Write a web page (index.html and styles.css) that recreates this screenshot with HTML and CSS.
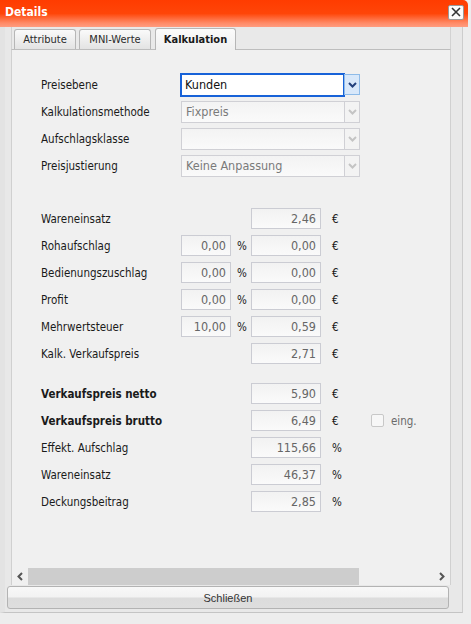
FILE: index.html
```html
<!DOCTYPE html>
<html lang="de">
<head>
    <meta charset="UTF-8">
    <meta name="viewport" content="width=device-width, initial-scale=1.0">
    <title>Details</title>
    <link rel="stylesheet" href="styles.css">
</head>
<body>

    <!-- Details Window -->
    <div class="dialog">
        <div class="titlebar">
            <span class="title">Details</span>
            <span class="close-btn">
                <svg width="10" height="10" viewBox="0 0 10 10"><path d="M1 1 L9 9 M9 1 L1 9" stroke="#333" stroke-width="1.6" fill="none"/></svg>
            </span>
        </div>

        <div class="window-body">
            <!-- Tabs -->
            <div class="tabbar">
                <div class="tab tab-attr">Attribute</div>
                <div class="tab tab-mni">MNI-Werte</div>
                <div class="tab tab-calc active">Kalkulation</div>
            </div>

            <!-- Kalkulation Panel -->
            <div class="panel">
                <div class="form">

                    <div class="fields">
                        <div class="label">Preisebene</div>
                        <div class="combo focus">
                            <div class="combo-text">Kunden</div>
                            <div class="combo-btn">
                                <svg width="9" height="6" viewBox="0 0 9 6"><path d="M1 1 L4.5 4.5 L8 1" stroke="#22407c" stroke-width="2" fill="none"/></svg>
                            </div>
                        </div>

                        <div class="label">Kalkulationsmethode</div>
                        <div class="combo">
                            <div class="combo-text">Fixpreis</div>
                            <div class="combo-btn">
                                <svg width="9" height="6" viewBox="0 0 9 6"><path d="M1 1 L4.5 4.5 L8 1" stroke="#c4c4c4" stroke-width="2" fill="none"/></svg>
                            </div>
                        </div>

                        <div class="label">Aufschlagsklasse</div>
                        <div class="combo">
                            <div class="combo-text"></div>
                            <div class="combo-btn">
                                <svg width="9" height="6" viewBox="0 0 9 6"><path d="M1 1 L4.5 4.5 L8 1" stroke="#c4c4c4" stroke-width="2" fill="none"/></svg>
                            </div>
                        </div>

                        <div class="label">Preisjustierung</div>
                        <div class="combo">
                            <div class="combo-text">Keine Anpassung</div>
                            <div class="combo-btn">
                                <svg width="9" height="6" viewBox="0 0 9 6"><path d="M1 1 L4.5 4.5 L8 1" stroke="#c4c4c4" stroke-width="2" fill="none"/></svg>
                            </div>
                        </div>
                    </div>

                    <div class="fields calc">
                        <div class="label">Wareneinsatz</div>
                        <input class="num wide" value="2,46" readonly>
                        <div class="unit">€</div>

                        <div class="label">Rohaufschlag</div>
                        <input class="num" value="0,00" readonly>
                        <div class="pct">%</div>
                        <input class="num wide" value="0,00" readonly>
                        <div class="unit">€</div>

                        <div class="label">Bedienungszuschlag</div>
                        <input class="num" value="0,00" readonly>
                        <div class="pct">%</div>
                        <input class="num wide" value="0,00" readonly>
                        <div class="unit">€</div>

                        <div class="label">Profit</div>
                        <input class="num" value="0,00" readonly>
                        <div class="pct">%</div>
                        <input class="num wide" value="0,00" readonly>
                        <div class="unit">€</div>

                        <div class="label">Mehrwertsteuer</div>
                        <input class="num" value="10,00" readonly>
                        <div class="pct">%</div>
                        <input class="num wide" value="0,59" readonly>
                        <div class="unit">€</div>

                        <div class="label">Kalk. Verkaufspreis</div>
                        <input class="num wide" value="2,71" readonly>
                        <div class="unit">€</div>
                    </div>

                    <div class="fields result">
                        <div class="label bold">Verkaufspreis netto</div>
                        <input class="num wide" value="5,90" readonly>
                        <div class="unit">€</div>

                        <div class="label bold">Verkaufspreis brutto</div>
                        <input class="num wide" value="6,49" readonly>
                        <div class="unit">€</div>
                        <label class="check"><span class="box"></span>eing.</label>

                        <div class="label">Effekt. Aufschlag</div>
                        <input class="num wide" value="115,66" readonly>
                        <div class="unit">%</div>

                        <div class="label">Wareneinsatz</div>
                        <input class="num wide" value="46,37" readonly>
                        <div class="unit">%</div>

                        <div class="label">Deckungsbeitrag</div>
                        <input class="num wide" value="2,85" readonly>
                        <div class="unit">%</div>
                    </div>

                </div>

                <!-- Horizontal Scrollbar -->
                <div class="hscroll">
                    <span class="arrow">
                        <svg width="6" height="9" viewBox="0 0 6 9"><path d="M5 1 L1.5 4.5 L5 8" stroke="#555" stroke-width="2" fill="none"/></svg>
                    </span>
                    <span class="thumb"></span>
                    <span class="track"></span>
                    <span class="arrow">
                        <svg width="6" height="9" viewBox="0 0 6 9"><path d="M1 1 L4.5 4.5 L1 8" stroke="#555" stroke-width="2" fill="none"/></svg>
                    </span>
                </div>
            </div>

            <button class="close-button">Schließen</button>
        </div>
    </div>

</body>
</html>
```

FILE: styles.css
```css
* {
    box-sizing: border-box;
}

body {
    margin: 0;
    background: #ededed;
    font-family: "DejaVu Sans Condensed", "DejaVu Sans", sans-serif;
    font-stretch: condensed;
    font-size: 11.5px;
    color: #1a1a1a;
}

/* Window frame */
.dialog {
    width: 468px;
}

.titlebar {
    height: 27px;
    display: flex;
    align-items: center;
    justify-content: space-between;
    padding: 0 4px 3px 5px;
    background: linear-gradient(#ff3c00 0, #ff4508 50%, #ff8a66 85%, #ff9c80 100%);
    border-top-right-radius: 5px;
}

.title {
    color: #fff;
    font-weight: bold;
    font-size: 12px;
}

.close-btn {
    width: 16px;
    height: 15px;
    display: flex;
    align-items: center;
    justify-content: center;
    background: #fbfbfb;
    border: 1px solid #9a9a9a;
    border-radius: 2px;
}

.window-body {
    width: 463px;
    background: #e8e8e8;
    border-left: 5px solid #e3e3e3;
    border-right: 1px solid #cdcdcd;
    border-bottom: 1px solid #c4c4c4;
    padding: 0 11px 3px 2px;
}

/* Tabs */
.tabbar {
    margin-left: 4px;
    height: 23px;
    display: flex;
    align-items: flex-end;
    gap: 3px;
    padding-left: 2px;
    border-left: 1px solid #d2d2d2;
    border-right: 1px solid #d2d2d2;
    border-bottom: 1px solid #bdbdbd;
    background: #e9e9e9;
}

.tab {
    height: 20px;
    line-height: 19px;
    text-align: center;
    font-size: 11px;
    color: #2b2b2b;
    border: 1px solid #b6b6b6;
    border-bottom: none;
    border-radius: 3px 3px 0 0;
    background: linear-gradient(#fafafa, #e3e3e3);
}

.tab-attr { width: 62px; }
.tab-mni { width: 72px; }
.tab-calc { width: 81px; margin-left: 1px; }

.tab.active {
    height: 22px;
    line-height: 21px;
    margin-bottom: -1px;
    font-weight: bold;
    color: #1a1a1a;
    background: linear-gradient(#fbfbfb, #f0f0f0);
}

/* Panel */
.panel {
    margin-left: 4px;
    width: 440px;
    height: 535px;
    display: flex;
    flex-direction: column;
    background: #f0f0f0;
    border-left: 1px solid #d0d0d0;
    border-right: 1px solid #d0d0d0;
}

.form {
    flex: 1;
    padding: 21px 0 0 29px;
}

.fields {
    display: grid;
    grid-template-columns: 140px 50px 20px 70px 50px auto;
    grid-auto-rows: 27px;
    align-items: center;
}

.fields.calc {
    margin-top: 26px;
}

.fields.result {
    margin-top: 13px;
}

.label {
    grid-column: 1;
    white-space: nowrap;
}

.label.bold {
    font-weight: bold;
}

/* Combo boxes */
.combo {
    grid-column: 2 / 6;
    width: 179px;
    height: 22px;
    display: flex;
}

.combo-text {
    flex: 1;
    padding-left: 4px;
    line-height: 20px;
    font-size: 12.5px;
    color: #7a7a7a;
    border: 1px solid #d0d0d5;
    border-right: none;
    background: linear-gradient(#f3f3f3, #fafafa);
}

.combo-btn {
    width: 16px;
    display: flex;
    align-items: center;
    justify-content: center;
    border: 1px solid #d0d0d5;
    background: #f3f3f3;
}

.combo.focus .combo-text {
    color: #111;
    background: #fff;
    border: 1px solid #1762d8;
    box-shadow: 0 0 0 1px #1762d8;
    padding-left: 3px;
}

.combo.focus .combo-btn {
    height: 21px;
    align-self: center;
    border-color: #8ebbe8;
    background: #d8e8fa;
}

/* Number fields */
.num {
    grid-column: 2;
    width: 50px;
    height: 21px;
    margin: 0;
    padding: 0 4px 0 0;
    text-align: right;
    font-family: inherit;
    font-stretch: condensed;
    font-size: 12.5px;
    color: #666;
    border: 1px solid #cbccd3;
    background: linear-gradient(#f2f2f2, #fafafa);
    outline: none;
}

.num.wide {
    grid-column: 4;
    width: 70px;
}

.pct {
    grid-column: 3;
    padding-left: 6px;
}

.unit {
    grid-column: 5;
    padding-left: 11px;
}

.check {
    grid-column: 6;
    display: flex;
    align-items: center;
    gap: 7px;
    color: #6a6a6a;
}

.check .box {
    width: 13px;
    height: 13px;
    border: 1px solid #c8c8c8;
    border-radius: 2px;
    background: #f7f7f7;
}

/* Scrollbar */
.hscroll {
    height: 17px;
    display: flex;
    align-items: center;
}

.arrow {
    width: 16px;
    height: 17px;
    display: flex;
    align-items: center;
    justify-content: center;
}

.thumb {
    width: 331px;
    height: 17px;
    background: #cdcdcd;
}

.track {
    flex: 1;
}

/* Footer button */
.close-button {
    display: block;
    width: 442px;
    height: 23px;
    margin: 1px 0 0 0;
    padding: 0;
    font-family: "Liberation Sans", Arial, sans-serif;
    font-size: 11px;
    color: #333;
    border: 1px solid #b3b3b3;
    border-radius: 3px;
    background: linear-gradient(#f8f8f8 0, #f2f2f2 48%, #dcdcdc 52%, #dedede 100%);
    cursor: pointer;
}
```
